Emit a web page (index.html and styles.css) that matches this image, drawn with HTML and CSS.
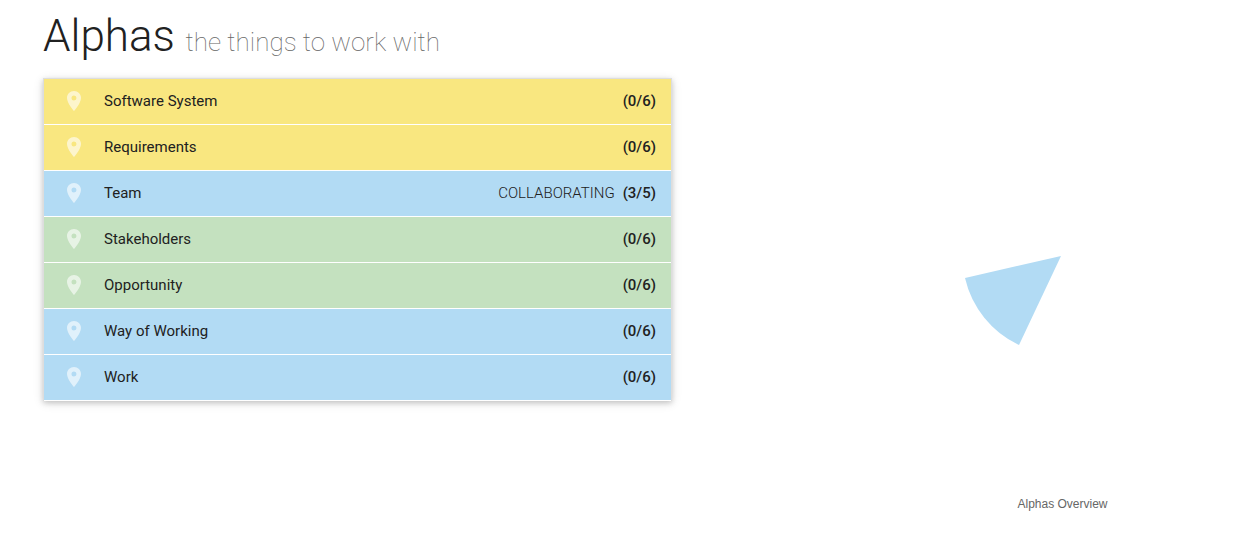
FILE: index.html
```
<!DOCTYPE html>
<html lang="en">
<head>
<meta charset="utf-8">
<title>Alphas</title>
<link rel="stylesheet" href="styles.css">
</head>
<body>
<svg class="defs" aria-hidden="true"><symbol id="pin" viewBox="0 0 24 24"><path fill="currentColor" d="M12 2C8.130 2 5 5.130 5 9c0 5.250 7 13 7 13s7-7.750 7-13c0-3.870-3.130-7-7-7zm0 9.500A2.500 2.500 0 1 1 12 6.500a2.500 2.500 0 0 1 0 5z"/></symbol></svg>
<main class="page">
<section class="alphas">
<h1 class="title">Alphas <small class="subtitle">the things to work with</small></h1>
<ul class="list">
<li class="row solution"><svg class="pin"><use href="#pin"/></svg><span class="name">Software System</span><span class="count">(0/6)</span></li>
<li class="row solution"><svg class="pin"><use href="#pin"/></svg><span class="name">Requirements</span><span class="count">(0/6)</span></li>
<li class="row endeavor"><svg class="pin"><use href="#pin"/></svg><span class="name">Team</span><span class="state">COLLABORATING</span><span class="count">(3/5)</span></li>
<li class="row customer"><svg class="pin"><use href="#pin"/></svg><span class="name">Stakeholders</span><span class="count">(0/6)</span></li>
<li class="row customer"><svg class="pin"><use href="#pin"/></svg><span class="name">Opportunity</span><span class="count">(0/6)</span></li>
<li class="row endeavor"><svg class="pin"><use href="#pin"/></svg><span class="name">Way of Working</span><span class="count">(0/6)</span></li>
<li class="row endeavor"><svg class="pin"><use href="#pin"/></svg><span class="name">Work</span><span class="count">(0/6)</span></li>
</ul>
</section>
<figure class="overview">
<svg class="chart" viewBox="0 0 200 200" role="img" aria-label="Team 3 of 5"><path fill="#b2dbf4" d="M98 100 L2 122 A98.500 98.500 0 0 0 56 189 Z"/></svg>
<figcaption class="caption">Alphas Overview</figcaption>
</figure>
</main>
</body>
</html>
```
FILE: styles.css
```
* { box-sizing: border-box; }
body { margin: 0; background: #fff; color: #212121; font-family: Roboto, sans-serif; font-size: 15px; }
.defs { position: absolute; width: 0; height: 0; }
.page { display: grid; grid-template-columns: 629fr 389fr; column-gap: 196px; padding: 8px 0 0 43px; }
.title { margin: 0 0 14px; color: #212121; font-size: 44px; font-weight: 300; line-height: 56px; }
.subtitle { color: #666; font-size: 26px; font-weight: 100; line-height: 1; }
.list { margin: 0; padding: 0; list-style: none; border: 1px solid #ddd; border-bottom: 0; box-shadow: 0 2px 5px rgba(0, 0, 0, .16), 0 2px 10px rgba(0, 0, 0, .12); }
.row { display: flex; align-items: center; height: 46px; padding: 0 15px 1px 18px; border-bottom: 1px solid #fff; }
.solution { background: #f9e780; }
.endeavor { background: #b2dbf4; }
.customer { background: #c4e1bf; }
.pin { width: 24px; height: 24px; margin-right: 18px; color: rgba(255, 255, 255, .6); }
.name { flex: 1; }
.state { margin-right: 8px; font-weight: 300; }
.count { font-weight: 500; }
.overview { display: flex; flex-direction: column; align-items: center; margin: 0; padding-top: 148px; }
.chart { width: 200px; height: 200px; }
.caption { margin-top: 141px; color: #666; font: 12px/14px "Liberation Sans", Arial, sans-serif; }
```
